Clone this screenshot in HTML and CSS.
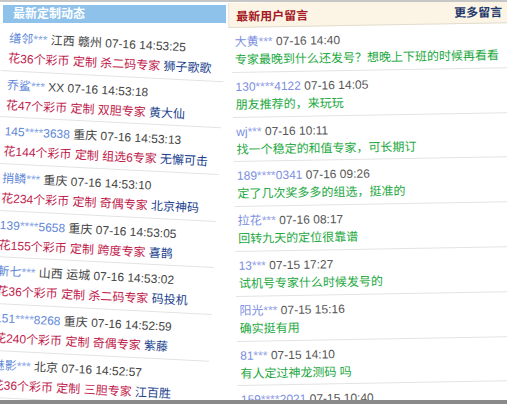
FILE: index.html
```html
<!DOCTYPE html>
<html lang="zh">
<head>
<meta charset="utf-8">
<title>最新定制动态</title>
<link rel="stylesheet" href="styles.css">
</head>
<body>
<div class="screen">
  <div class="topbar"></div>
  <div class="stage">
    <section class="panel left">
      <div class="lhead">最新定制动态</div>
      <ul class="orders">
        <li><div class="l1"><span class="nm">缮邻<i>***</i></span> 江西 赣州 07-16 14:53:25</div><div class="l2">花36个彩币 定制 杀二码专家 <b>狮子歌歌</b></div></li>
        <li><div class="l1"><span class="nm">乔鲨<i>***</i></span> XX 07-16 14:53:18</div><div class="l2">花47个彩币 定制 双胆专家 <b>黄大仙</b></div></li>
        <li><div class="l1"><span class="nm">145<i>****</i>3638</span> 重庆 07-16 14:53:13</div><div class="l2">花144个彩币 定制 组选6专家 <b>无懈可击</b></div></li>
        <li><div class="l1"><span class="nm">捎鳞<i>***</i></span> 重庆 07-16 14:53:10</div><div class="l2">花234个彩币 定制 奇偶专家 <b>北京神码</b></div></li>
        <li><div class="l1"><span class="nm">139<i>****</i>5658</span> 重庆 07-16 14:53:05</div><div class="l2">花155个彩币 定制 跨度专家 <b>喜鹊</b></div></li>
        <li><div class="l1"><span class="nm">斬七<i>***</i></span> 山西 运城 07-16 14:53:02</div><div class="l2">花36个彩币 定制 杀二码专家 <b>码投机</b></div></li>
        <li><div class="l1"><span class="nm">151<i>****</i>8268</span> 重庆 07-16 14:52:59</div><div class="l2">花240个彩币 定制 奇偶专家 <b>紫藤</b></div></li>
        <li><div class="l1"><span class="nm">魅影<i>***</i></span> 北京 07-16 14:52:57</div><div class="l2">花36个彩币 定制 三胆专家 <b>江百胜</b></div></li>
      </ul>
    </section>
    <section class="panel right">
      <div class="rhead"><span class="rtitle">最新用户留言</span><span class="more">更多留言</span></div>
      <ul class="msgs">
        <li><div class="r1"><span class="nm">大黄<i>***</i></span> 07-16 14:40</div><div class="r2">专家最晚到什么还发号？想晚上下班的时候再看看</div></li>
        <li><div class="r1"><span class="nm">130<i>****</i>4122</span> 07-16 14:05</div><div class="r2">朋友推荐的，来玩玩</div></li>
        <li><div class="r1"><span class="nm">wj<i>***</i></span> 07-16 10:11</div><div class="r2">找一个稳定的和值专家，可长期订</div></li>
        <li><div class="r1"><span class="nm">189<i>****</i>0341</span> 07-16 09:26</div><div class="r2">定了几次奖多多的组选，挺准的</div></li>
        <li><div class="r1"><span class="nm">拉花<i>***</i></span> 07-16 08:17</div><div class="r2">回转九天的定位很靠谱</div></li>
        <li><div class="r1"><span class="nm">13<i>***</i></span> 07-15 17:27</div><div class="r2">试机号专家什么时候发号的</div></li>
        <li><div class="r1"><span class="nm">阳光<i>***</i></span> 07-15 15:16</div><div class="r2">确实挺有用</div></li>
        <li><div class="r1"><span class="nm">81<i>***</i></span> 07-15 14:10</div><div class="r2">有人定过神龙测码 吗</div></li>
        <li><div class="r1"><span class="nm">159<i>****</i>2021</span> 07-15 10:40</div><div class="r2">看看效果怎么样</div></li>
      </ul>
    </section>
  </div>
  <div class="botbar"></div>
</div>
</body>
</html>
```
FILE: styles.css
```css
html, body {
  margin: 0;
  padding: 0;
}
body {
  width: 507px;
  height: 404px;
  overflow: hidden;
  background: #fff;
  font-family: "Liberation Sans", "Noto Sans CJK SC", sans-serif;
  font-size: 12px;
}
ul {
  list-style: none;
  margin: 0;
  padding: 0;
}
i {
  font-style: normal;
}
b {
  font-weight: normal;
}
.screen {
  display: flex;
  flex-direction: column;
  height: 404px;
}
.topbar {
  flex: none;
  height: 2px;
  background: #c6c6c6;
}
.botbar {
  flex: none;
  height: 4px;
  background: #8a8a8a;
}
.stage {
  flex: 1;
  min-height: 0;
  display: flex;
  overflow: hidden;
}
.panel {
  flex: none;
  background: #fff;
}
.left {
  width: 223px;
  margin: 3px 0 0 3px;
}
.lhead {
  height: 18px;
  line-height: 18px;
  padding-left: 10px;
  background: #8fc2eb;
  color: #fff;
  font-weight: bold;
}
.orders {
  margin-top: 1px;
  transform: rotate(2.9deg);
  transform-origin: 0 0;
}
.orders li {
  padding: 4px 0 1.7px 7px;
  border-bottom: 1px solid #e3e3e3;
  white-space: nowrap;
}
.l1, .l2 {
  height: 20px;
  line-height: 20px;
}
.l1 {
  color: #444;
}
.l1 .nm {
  color: #5f88d8;
}
.l1 .nm i {
  color: #86a6e6;
}
.l2 {
  color: #c01c4c;
}
.l2 b {
  color: #213f8e;
}
.right {
  width: 292px;
  margin: 1px 0 0 2px;
  transform: rotate(-1deg);
  transform-origin: 0 0;
}
.rhead {
  height: 24px;
  display: flex;
  align-items: center;
  justify-content: space-between;
  padding: 0 18px 0 7px;
  background: #fcf5e6;
  border-bottom: 1px solid #e2dccf;
  border-left: 1px solid #e4e4e4;
  font-weight: bold;
}
.rtitle {
  color: #a51b26;
}
.more {
  color: #1f3a6c;
}
.msgs li {
  margin-left: 3px;
  padding: 5px 0 2.8px 3px;
  border-bottom: 1px solid #e3e3e3;
  white-space: nowrap;
}
.r1, .r2 {
  height: 18px;
  line-height: 18px;
}
.r1 {
  color: #555;
}
.r1 .nm {
  color: #7d8fdf;
}
.r1 .nm i {
  color: #94a2e6;
}
.r2 {
  color: #22a83e;
}
```
